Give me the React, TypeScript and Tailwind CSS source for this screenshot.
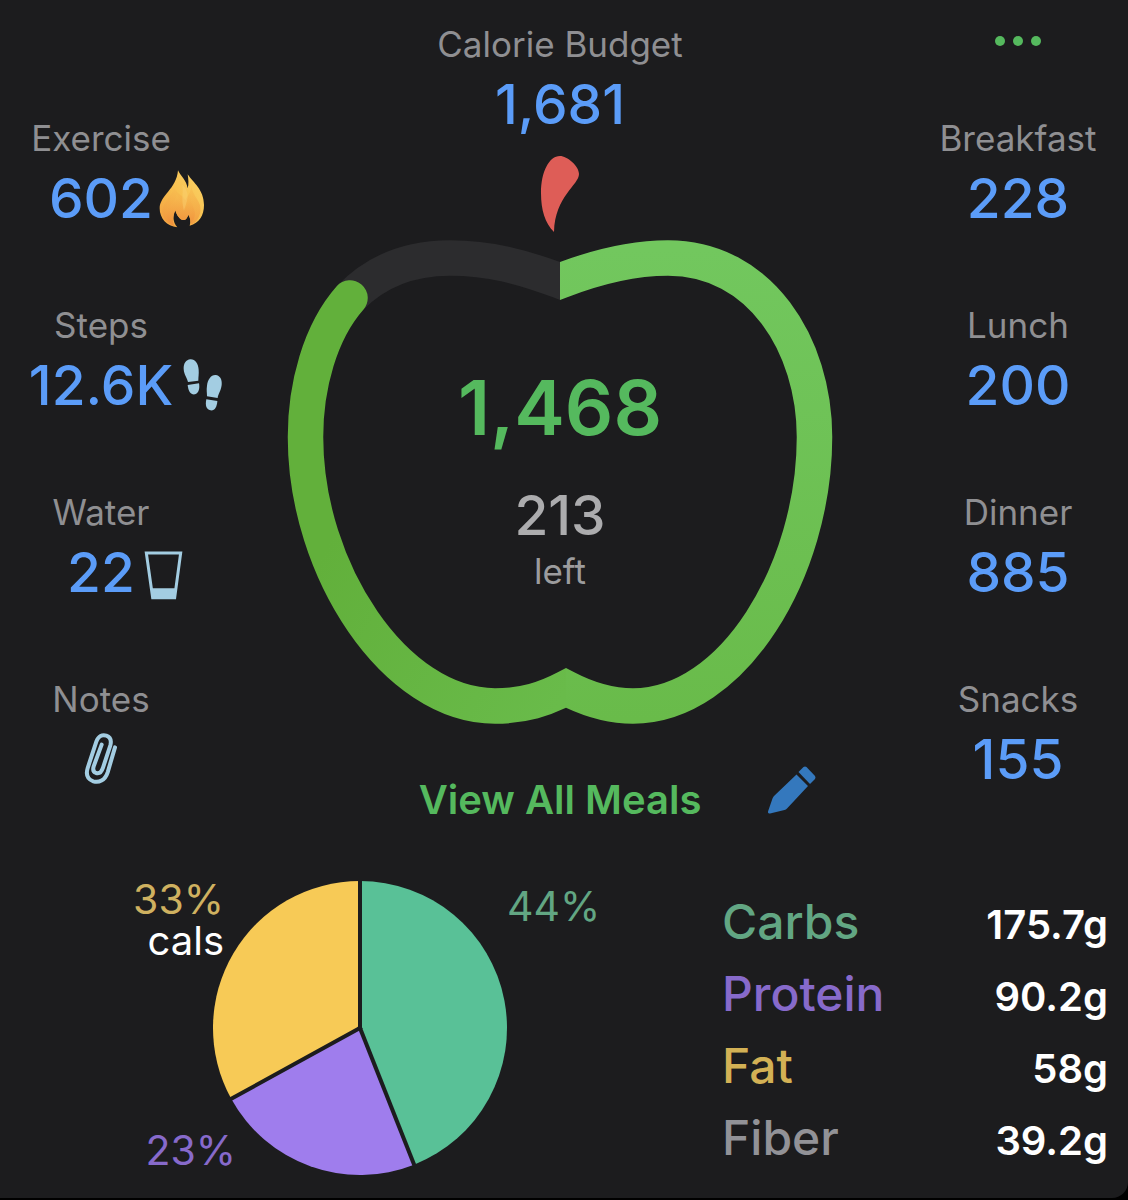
import type { ReactNode } from "react";

type Stat = {
    label: string;
    value?: string;
    icon?: ReactNode;
};

const FlameIcon = () => (
    <svg viewBox="474 207 144 180" className="-ml-[3px] w-12 h-[60px]" aria-hidden="true">
        <defs>
            <linearGradient id="flame" x1="0" y1="1" x2="1" y2="0">
                <stop offset="0" stopColor="#f3a03f" />
                <stop offset="0.5" stopColor="#f8c050" />
                <stop offset="1" stopColor="#fad568" />
            </linearGradient>
            <linearGradient id="flame-core" x1="0" y1="0" x2="0" y2="1">
                <stop offset="0" stopColor="#f8bf52" />
                <stop offset="1" stopColor="#ef8c3a" />
            </linearGradient>
        </defs>
        <path
            d="M534 214C541 230 560 244 563 268C567 255 565 240 563 226C580 252 612 272 612 318C612 350 598 372 569 380C573 368 571 355 565 347C562 356 558 363 550 363C540 363 530 350 526 334C518 350 518 370 532 385C500 382 479 358 479 328C479 290 530 270 534 214Z"
            fill="url(#flame)"
        />
        <path
            d="M520 262C522 290 486 306 487 340C489 360 504 376 522 381C516 362 520 348 526 334C532 350 540 363 550 363C558 363 562 356 565 347C571 355 573 368 571 378C590 372 604 350 601 324C599 304 580 294 574 262C572 284 562 290 556 304C550 290 530 284 520 262Z"
            fill="url(#flame-core)"
            opacity="0.6"
        />
        <path
            d="M530 284C530 308 498 324 500 352C502 366 510 376 522 381C516 362 520 348 526 334C532 350 540 363 550 363C558 363 562 356 565 347C569 353 572 362 572 372C584 362 588 346 582 330C578 318 572 308 572 290C570 306 562 316 556 330C552 314 536 304 530 284Z"
            fill="url(#flame-core)"
            opacity="0.7"
        />
        <path d="M546 256C552 276 542 300 552 336C558 312 568 296 560 276C557 268 552 262 546 256Z" fill="#fbd477" opacity="0.4" />
    </svg>
);

const StepsIcon = () => (
    <svg viewBox="541 776 126 165" className="w-[42px] h-[55px]" fill="#a3cde2" aria-hidden="true">
        <path d="M569 780C583 779 593 793 594 811C595 824 593 833 593 844L562 848C560 837 550 827 549 809C548 793 556 781 569 780Z" />
        <path d="M561 857L595 852C598 868 594 882 583 885C570 887 563 876 561 857Z" />
        <path d="M645 827C658 828 665 841 663 857C661 875 652 884 651 896L619 891C619 880 617 872 619 859C621 841 631 826 645 827Z" />
        <path d="M617 900L650 905C649 923 642 935 629 933C617 931 613 918 617 900Z" />
    </svg>
);

const GlassIcon = () => (
    <svg viewBox="430 206 120 150" className="w-10 h-[50px] overflow-visible" aria-hidden="true">
        <path d="M440 224H543L525 358H459Z" fill="none" stroke="#a3cde2" strokeWidth="9" />
        <path d="M454 330H530L526 362H457Z" fill="#a3cde2" />
    </svg>
);

const PaperclipIcon = () => (
    <svg viewBox="248 756 108 168" className="w-9 h-14" fill="none" stroke="#a3cde2" strokeWidth="12" strokeLinecap="round" aria-hidden="true">
        <path d="M344 805L322 880C314 905 295 912 279 907C262 901 256 887 262 867L288 788C294 771 306 766 318 770C329 774 334 784 330 799L308 866C303 881 296 885 287 882C279 879 277 872 280 862L304 797" />
    </svg>
);

const PencilIcon = () => (
    <svg viewBox="766 765 50 50" className="w-[50px] h-[50px]" fill="#3478bd" aria-hidden="true">
        <path d="M795.5 774.5L807 786L786 808.5Q785 809.500 783.500 810L769 813.500Q766.500 814 767 811.500L771.500 798.500Q772 797 773 796Z" />
        <path d="M797.500 772L802.500 767Q804 766 805.500 767L814 776Q815 777.500 814 779L809 784Z" />
    </svg>
);

const trackers: Stat[] = [
    { label: "Exercise", value: "602", icon: <FlameIcon /> },
    { label: "Steps", value: "12.6K", icon: <StepsIcon /> },
    { label: "Water", value: "22", icon: <GlassIcon /> },
    { label: "Notes", icon: <PaperclipIcon /> },
];

const meals: Stat[] = [
    { label: "Breakfast", value: "228" },
    { label: "Lunch", value: "200" },
    { label: "Dinner", value: "885" },
    { label: "Snacks", value: "155" },
];

const macros = [
    { name: "Carbs", amount: "175.7g", color: "text-[#62a683]" },
    { name: "Protein", amount: "90.2g", color: "text-[#876acb]" },
    { name: "Fat", amount: "58g", color: "text-[#d3b155]" },
    { name: "Fiber", amount: "39.2g", color: "text-[#929297]" },
];

const slices = [
    { percent: 44, fill: "#59c197" },
    { percent: 23, fill: "#9f7ded" },
    { percent: 33, fill: "#f7ca56" },
];

const StatItem = ({ label, value, icon }: Stat) => (
    <li className="flex flex-col items-center gap-1">
        <span className="text-[35px] leading-10 text-[#8f8f92]">{label}</span>
        {value ? (
            <span className="grid w-full grid-cols-[1fr_auto_1fr] items-center gap-2 text-[55px] leading-[72px] font-medium text-[#5b9cf8]">
                <span className="col-start-2">{value}</span>
                {icon && <span className="w-0">{icon}</span>}
            </span>
        ) : (
            <span className="flex h-[72px] items-center">{icon}</span>
        )}
    </li>
);

const PROGRESS =
    "M540 289L560 281C596 267 630 258 668 258C760 258 814.500 345 814.500 437C814.500 570 733 706 633 706C608 706 587 699 566 688C545 699 524 706 495 706C395 706 305.500 570 305.500 437C305.500 386 320 332 350 298";

const AppleRing = () => (
    <svg viewBox="280 148 560 584" className="col-start-1 row-start-1 w-full" fill="none" strokeWidth="35.5" aria-hidden="true">
        <defs>
            <linearGradient id="ring-right" gradientUnits="userSpaceOnUse" x1="600" y1="250" x2="600" y2="720">
                <stop offset="0" stopColor="#72c75e" />
                <stop offset="1" stopColor="#69bb4a" />
            </linearGradient>
            <linearGradient id="ring-left" gradientUnits="userSpaceOnUse" x1="566" y1="690" x2="320" y2="560">
                <stop offset="0" stopColor="#69bb4a" />
                <stop offset="1" stopColor="#62b03b" />
            </linearGradient>
            <clipPath id="track-side">
                <path d="M280 148H560V400H280Z" />
            </clipPath>
            <clipPath id="right-side">
                <path d="M560 148H840V732H566V400H560Z" />
            </clipPath>
            <clipPath id="left-side">
                <path d="M280 148H480V400H566V732H280Z" />
            </clipPath>
        </defs>
        {/* Leaf */}
        <path d="M554 232C545 223 541 210 541 193C541 172 549 156 560 156C567 156 579 166 579 174C579 185 555 196 554 232Z" fill="#de5d57" />
        {/* Remaining budget */}
        <path d="M350 298C376 271 410 258 450 258C490 258 523 267 560 281L580 289" stroke="#2c2c2e" clipPath="url(#track-side)" />
        {/* Eaten so far, shaded from the stem round to the rounded end */}
        <path d={PROGRESS} stroke="url(#ring-left)" strokeLinecap="round" clipPath="url(#left-side)" />
        <path d={PROGRESS} stroke="url(#ring-right)" clipPath="url(#right-side)" />
    </svg>
);

const MacroPie = () => {
    const cx = 360;
    const cy = 1028;
    const r = 147;
    const point = (percent: number) => {
        const angle = (percent / 100) * Math.PI * 2;
        return `${cx + r * Math.sin(angle)} ${cy - r * Math.cos(angle)}`;
    };

    let start = 0;
    const wedges = slices.map(({ percent, fill }) => {
        const from = start;
        start += percent;
        return { from, to: start, fill };
    });

    return (
        <svg viewBox="120 870 490 320" className="w-[490px] min-w-0" fontSize="41" role="img" aria-label="Calories by macro">
            {wedges.map(({ from, to, fill }) => (
                <path key={fill} d={`M${cx} ${cy}L${point(from)}A${r} ${r} 0 0 1 ${point(to)}Z`} fill={fill} />
            ))}
            {wedges.map(({ from }) => (
                <path key={from} d={`M${cx} ${cy}L${point(from)}`} stroke="#1c1c1e" strokeWidth="4" strokeLinecap="square" />
            ))}
            <text textAnchor="end" fill="#cfb160">
                <tspan x="224" y="914">33%</tspan>
                <tspan x="224" y="955" fontSize="40" fill="#ffffff">cals</tspan>
            </text>
            <text x="507" y="921" fill="#62a683">44%</text>
            <text x="236" y="1165" textAnchor="end" fill="#876acb">23%</text>
        </svg>
    );
};

export default function App() {
    return (
        <div className="flex min-h-screen flex-col bg-black pb-[2px] font-['Inter',sans-serif]">
            <main className="flex-1 rounded-br-2xl bg-[#1c1c1e]">
                <section className="grid grid-cols-[202px_1fr_200px] pr-[10px]">
                    <ul className="flex flex-col gap-[71px] pt-[118px]">
                        {trackers.map((item) => (
                            <StatItem key={item.label} {...item} />
                        ))}
                    </ul>

                    <div className="flex flex-col items-center pt-6">
                        <h1 className="text-[35px] leading-10 text-[#8f8f92]">Calorie Budget</h1>
                        <p className="mt-1 text-[55px] leading-[72px] font-medium text-[#5b9cf8]">1,681</p>

                        <div className="mt-2 grid w-[560px] max-w-full">
                            <AppleRing />
                            <div className="col-start-1 row-start-1 flex flex-col items-center pt-[219px]">
                                <p className="text-[76px] leading-[80px] font-semibold text-[#55b95e]">1,468</p>
                                <p className="mt-8 text-[55px] leading-[72px] font-medium text-[#acacae]">213</p>
                                <p className="text-[35px] leading-10 text-[#9c9c9e]">left</p>
                            </div>
                        </div>

                        <div className="mt-11 grid w-full grid-cols-[1fr_auto_1fr] items-center gap-[66px]">
                            <button className="col-start-2 text-[40px] leading-[48px] font-semibold text-[#55b95e]">
                                View All Meals
                            </button>
                            <button aria-label="Edit meals" className="-mt-5 justify-self-start">
                                <PencilIcon />
                            </button>
                        </div>
                    </div>

                    <div className="flex flex-col items-center">
                        <button aria-label="More options" className="flex h-[82px] items-center gap-2 px-4">
                            <span className="size-[10px] rounded-full bg-[#55b95e]" />
                            <span className="size-[10px] rounded-full bg-[#55b95e]" />
                            <span className="size-[10px] rounded-full bg-[#55b95e]" />
                        </button>
                        <ul className="mt-9 flex w-full flex-col gap-[71px]">
                            {meals.map((item) => (
                                <StatItem key={item.label} {...item} />
                            ))}
                        </ul>
                    </div>
                </section>

                <section className="mt-[46px] flex items-start justify-between pr-5 pb-2 pl-[120px]">
                    <MacroPie />
                    <table className="mt-4 w-[386px]">
                        <tbody>
                            {macros.map(({ name, amount, color }) => (
                                <tr key={name} className="h-[72px] align-baseline">
                                    <th scope="row" className={`p-0 text-left text-[48px] leading-[72px] font-medium ${color}`}>
                                        {name}
                                    </th>
                                    <td className="p-0 text-right text-[40px] font-semibold text-white">{amount}</td>
                                </tr>
                            ))}
                        </tbody>
                    </table>
                </section>
            </main>
        </div>
    );
}
